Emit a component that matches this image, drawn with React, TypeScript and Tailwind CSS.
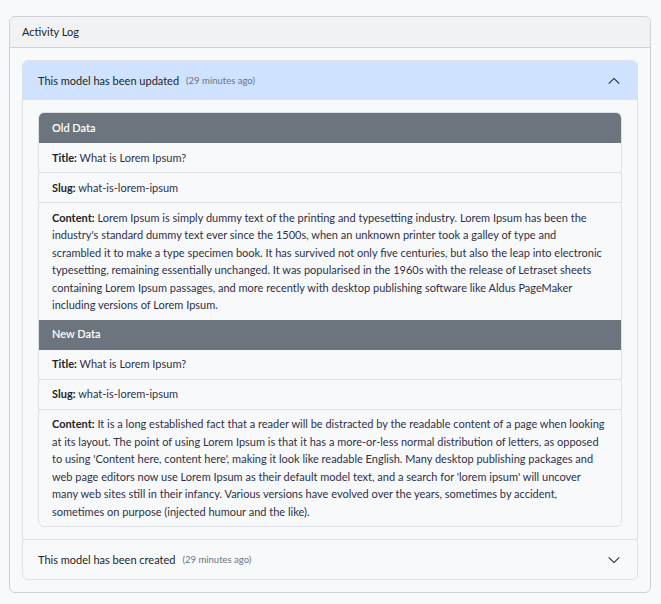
import type { FC, ReactNode } from "react";

const oldContent =
  "Lorem Ipsum is simply dummy text of the printing and typesetting industry. Lorem Ipsum has been the industry's standard dummy text ever since the 1500s, when an unknown printer took a galley of type and scrambled it to make a type specimen book. It has survived not only five centuries, but also the leap into electronic typesetting, remaining essentially unchanged. It was popularised in the 1960s with the release of Letraset sheets containing Lorem Ipsum passages, and more recently with desktop publishing software like Aldus PageMaker including versions of Lorem Ipsum.";

const newContent =
  "It is a long established fact that a reader will be distracted by the readable content of a page when looking at its layout. The point of using Lorem Ipsum is that it has a more-or-less normal distribution of letters, as opposed to using 'Content here, content here', making it look like readable English. Many desktop publishing packages and web page editors now use Lorem Ipsum as their default model text, and a search for 'lorem ipsum' will uncover many web sites still in their infancy. Various versions have evolved over the years, sometimes by accident, sometimes on purpose (injected humour and the like).";

const Chevron: FC<{ up?: boolean; className?: string }> = ({ up, className }) => (
  <svg width="14" height="14" viewBox="0 0 16 16" className={className} fill="none">
    <path
      d={up ? "M2 11 L8 5 L14 11" : "M2 5 L8 11 L14 5"}
      stroke="currentColor"
      strokeWidth="1.2"
    />
  </svg>
);

const Row: FC<{ label: string; children: ReactNode; last?: boolean }> = ({ label, children, last }) => (
  <div className={`px-[13px] py-[5.75px] ${last ? "" : "border-b border-[#dee2e6]"}`}>
    <span className="font-bold text-[#212529]">{label}:</span>{" "}
    <span className="text-[#2e3047]">{children}</span>
  </div>
);

const DataHead: FC<{ title: string }> = ({ title }) => (
  <div className="bg-[#6c757d] text-white font-semibold px-[13px] py-[5.75px] border-b border-[#6c757d]">
    {title}
  </div>
);

export default function App() {
  return (
    <div
      className="min-h-[604px] bg-[#f8f9fb] pt-4 pl-[9px] pr-[10px] text-[11px] leading-[17.5px] text-[#212529]"
      style={{ fontFamily: "Lato, 'Open Sans', sans-serif" }}
    >
      <div className="border border-[#cfd1d4] rounded-md bg-[#f8f9fb]">
        <div className="h-[31px] flex items-center px-[12px] bg-[#f1f2f4] border-b border-[#cfd1d4] rounded-t-md">
          Activity Log
        </div>
        <div className="p-[12px]">
          <div className="border border-[#dee2e6] rounded-md overflow-hidden">
            <div className="h-[39px] flex items-center px-[15px] bg-[#cfe2ff] text-[#212529]">
              <span>This model has been updated</span>
              <span className="ml-[7px] text-[9.5px] text-[#6c757d]">(29 minutes ago)</span>
              <Chevron up className="ml-auto mr-[1px] text-[#052c65]" />
            </div>
            <div className="px-[15px] py-[12px] border-b border-[#dee2e6]">
              <div className="border border-[#dee2e6] rounded-md overflow-hidden">
                <DataHead title="Old Data" />
                <Row label="Title">What is Lorem Ipsum?</Row>
                <Row label="Slug">what-is-lorem-ipsum</Row>
                <Row label="Content" last>
                  {oldContent}
                </Row>
                <DataHead title="New Data" />
                <Row label="Title">What is Lorem Ipsum?</Row>
                <Row label="Slug">what-is-lorem-ipsum</Row>
                <Row label="Content" last>
                  {newContent}
                </Row>
              </div>
            </div>
            <div className="h-[39px] flex items-center px-[15px] text-[#212529]">
              <span>This model has been created</span>
              <span className="ml-[7px] text-[9.5px] text-[#6c757d]">(29 minutes ago)</span>
              <Chevron className="ml-auto mr-[1px] text-[#212529]" />
            </div>
          </div>
        </div>
      </div>
    </div>
  );
}
